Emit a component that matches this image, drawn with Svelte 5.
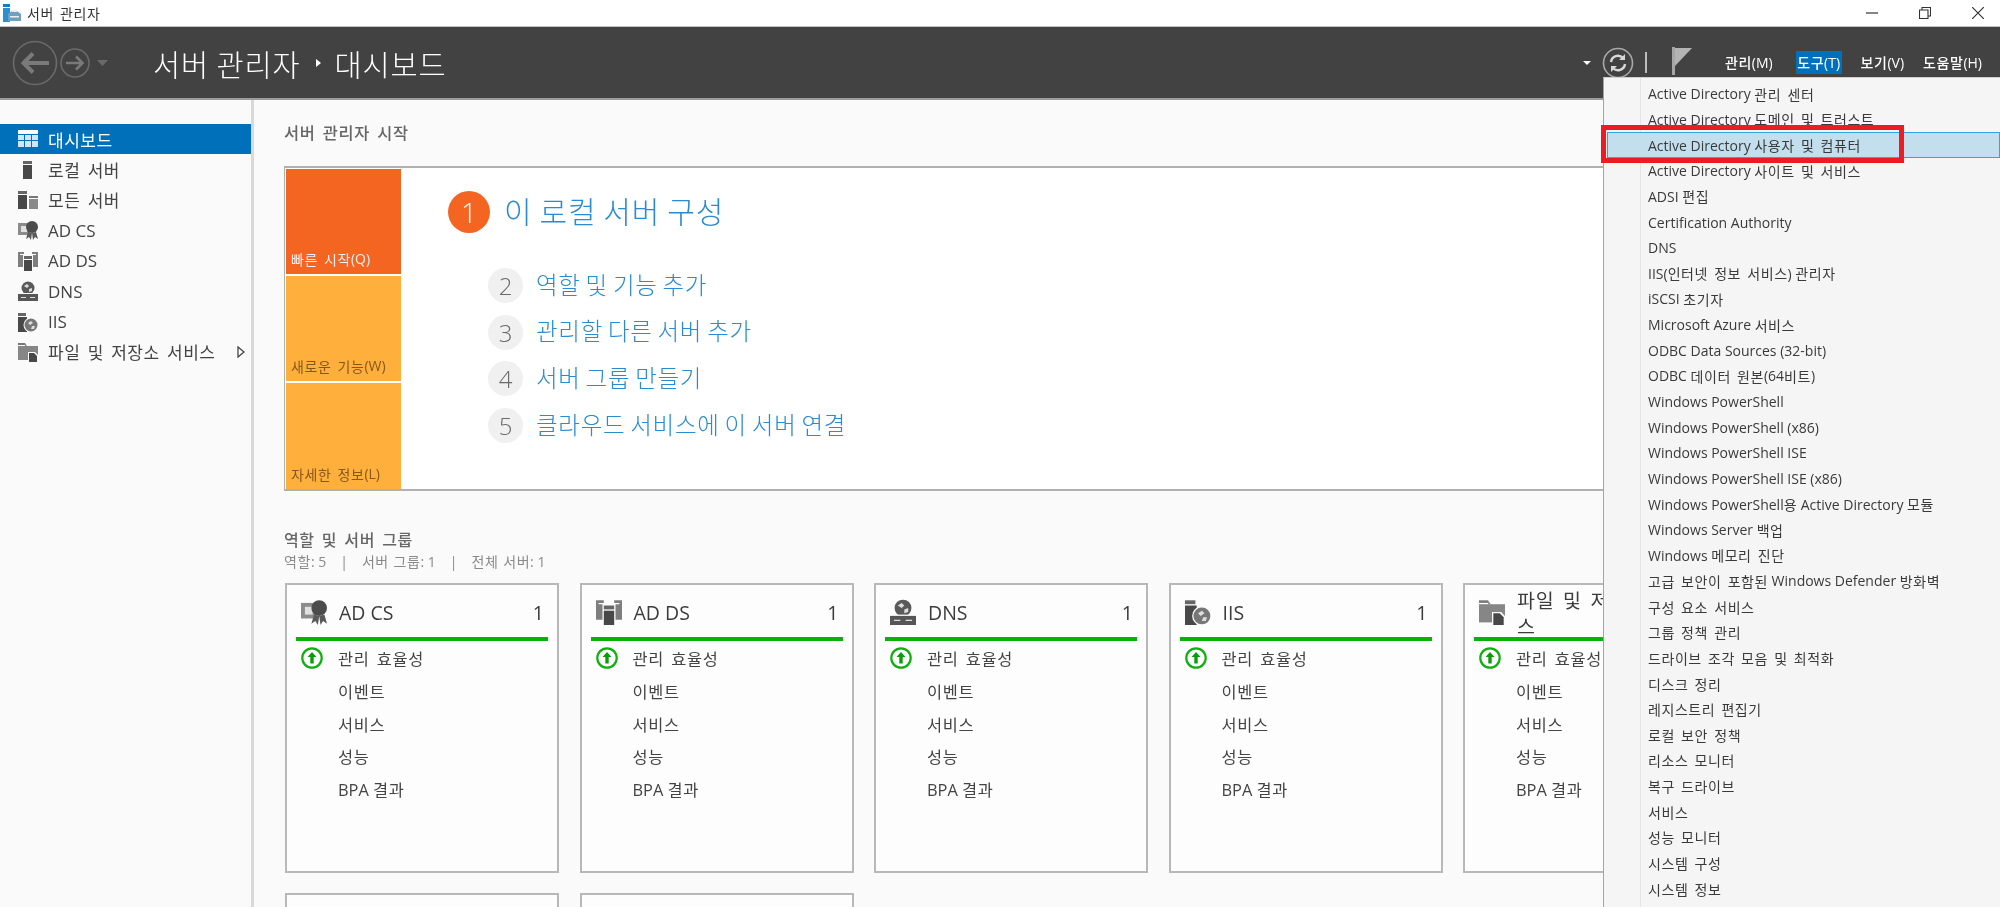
<script>
  const side = [
    ['grid', '대시보드'], ['local', '로컬 서버'], ['all', '모든 서버'], ['cs', 'AD CS'],
    ['ds', 'AD DS'], ['dns', 'DNS'], ['iis', 'IIS'], ['files', '파일 및 저장소 서비스']
  ];
  const steps = ['역할 및 기능 추가', '관리할 다른 서버 추가', '서버 그룹 만들기', '클라우드 서비스에 이 서버 연결'];
  const cards = [['cs', 'AD CS'], ['ds', 'AD DS'], ['dns', 'DNS'], ['iis', 'IIS'], ['files', '파일 및 저장소 서비스']];
  const rows = ['이벤트', '서비스', '성능', 'BPA 결과'];
  const menu = [
    'Active Directory 관리 센터', 'Active Directory 도메인 및 트러스트', 'Active Directory 사용자 및 컴퓨터',
    'Active Directory 사이트 및 서비스', 'ADSI 편집', 'Certification Authority', 'DNS',
    'IIS(인터넷 정보 서비스) 관리자', 'iSCSI 초기자', 'Microsoft Azure 서비스', 'ODBC Data Sources (32-bit)',
    'ODBC 데이터 원본(64비트)', 'Windows PowerShell', 'Windows PowerShell (x86)', 'Windows PowerShell ISE',
    'Windows PowerShell ISE (x86)', 'Windows PowerShell용 Active Directory 모듈', 'Windows Server 백업',
    'Windows 메모리 진단', '고급 보안이 포함된 Windows Defender 방화벽', '구성 요소 서비스', '그룹 정책 관리',
    '드라이브 조각 모음 및 최적화', '디스크 정리', '레지스트리 편집기', '로컬 보안 정책', '리소스 모니터',
    '복구 드라이브', '서비스', '성능 모니터', '시스템 구성', '시스템 정보'
  ];
  const split = (s) => s.split(/([\uAC00-\uD7A3]+(?: +[\uAC00-\uD7A3]+)*)/).filter(Boolean)
    .map((p) => ({ p, ko: /[\uAC00-\uD7A3]/.test(p) }));
</script>

{#snippet t(text)}{#each split(text) as r}<span class:ko={r.ko}>{r.p}</span>{/each}{/snippet}

{#snippet icon(n)}
  <svg class="ic" viewBox="0 0 20 20" width="20" height="20" aria-hidden="true">
    {#if n === 'grid'}
      <path d="M0 1h20v4H0z" fill="#fff"/>
      <path d="M0 6h6v5H0zM7 6h6v5H7zM14 6h6v5h-6zM0 12h6v6H0zM7 12h6v6H7zM14 12h6v6h-6z" fill="#cfe6f6"/>
    {:else if n === 'local'}
      <path d="M5 1h9v3H5z" fill="#666"/><path d="M5 5h9v14H5z" fill="#484848"/>
    {:else if n === 'all'}
      <path d="M0 1h9v3H0z" fill="#666"/><path d="M0 5h9v14H0z" fill="#484848"/>
      <path d="M11 6h9v2h-9z" fill="#777"/><path d="M11 9h9v10h-9z" fill="#8a8a8a"/>
    {:else if n === 'cs'}
      <path d="M0 3h12v12H0z" fill="#8c8c8c"/><path d="M3 6h6v6H3z" fill="#e0e0e0"/>
      <circle cx="14" cy="7" r="6" fill="#4c4c4c"/>
      <path d="M10 12l-2 7 3-2 2 3 1-7zM18 12l2 7-3-2-2 3-1-7z" fill="#5a5a5a"/>
    {:else if n === 'ds'}
      <path d="M0 1h6v2H2v13H0zM20 1h-6v2h4v13h2zM2 4h3v12H2zM15 4h3v12h-3z" fill="#7e7e7e"/>
      <path d="M6 5h8v3H6z" fill="#666"/><path d="M6 9h8v11H6z" fill="#484848"/>
    {:else if n === 'dns'}
      <circle cx="10" cy="7" r="6.5" fill="#5a5a5a"/><path d="M6 5l3-2 2 2-2 2zM11 8l3-1 0 3-3 1z" fill="#ddd"/>
      <path d="M3 12h14v2H3z" fill="#fafafa"/>
      <path d="M0 13h20v7H0z" fill="#565656"/><path d="M3 16h5v1H3zM12 16h5v1h-5z" fill="#ddd"/>
    {:else if n === 'iis'}
      <path d="M0 1h8v3H0z" fill="#666"/><path d="M0 5h9v15H0z" fill="#484848"/>
      <circle cx="13" cy="13" r="7.5" fill="#fafafa"/><circle cx="13" cy="13" r="6.5" fill="#777"/>
      <path d="M10 11l3-2 2 2-3 2zM14 14l3 0-1 3-3 0z" fill="#ddd"/>
    {:else if n === 'files'}
      <path d="M0 1h7v2H0z" fill="#777"/><path d="M0 4h20v14H0z" fill="#868686"/>
      <path d="M7 1l2 3H7z" fill="#868686"/>
      <path d="M10 10h7l3 3v7H10z" fill="#fafafa"/><path d="M11 11h5l3 3v6h-8z" fill="#484848"/>
    {/if}
  </svg>
{/snippet}

<div class="app">
  <div class="titlebar">
    <svg class="appicon" viewBox="0 0 18 18" width="18" height="18" aria-hidden="true">
      <path d="M0 0h7v3H0z" fill="#0f7cc4"/><path d="M0 4h7v14H0z" fill="#2b8fd0"/>
      <path d="M5 10l4-3h5l4 3v7H5z" fill="#6fa0bf"/><path d="M9 6h5v2H9zM7 12h9v1.5H7z" fill="#e6eef4"/>
    </svg>
    <span class="apptitle">{@render t('서버 관리자')}</span>
    <div class="winbtns">
      <svg viewBox="0 0 12 12" width="12" height="12" aria-hidden="true"><path d="M0 6h12" stroke="#333" stroke-width="1.2"/></svg>
      <svg viewBox="0 0 12 12" width="12" height="12" aria-hidden="true"><path d="M.5 3h8.5v8.5H.5zM3 3V.5h8.5V9H9" fill="none" stroke="#333" stroke-width="1.1"/></svg>
      <svg viewBox="0 0 12 12" width="12" height="12" aria-hidden="true"><path d="M0 0l12 12M12 0L0 12" stroke="#333" stroke-width="1.2"/></svg>
    </div>
  </div>

  <header class="head">
    <svg class="nav" viewBox="0 0 100 46" width="100" height="46" aria-hidden="true">
      <circle cx="23" cy="23" r="21.5" fill="none" stroke="#6a6a6a" stroke-width="1.6"/>
      <path d="M37 23H12M21 13.5L11.5 23l9.5 9.5" fill="none" stroke="#7a7a7a" stroke-width="4"/>
      <circle cx="63" cy="23" r="14" fill="none" stroke="#6a6a6a" stroke-width="1.6"/>
      <path d="M54 23h16M64 16.5l6.5 6.5-6.5 6.5" fill="none" stroke="#7a7a7a" stroke-width="2.6"/>
      <path d="M85 20h11l-5.5 6z" fill="#6a6a6a"/>
    </svg>
    <div class="crumb">{@render t('서버 관리자')}<i class="sep"></i>{@render t('대시보드')}</div>
    <div class="tools">
      <i class="drop"></i>
      <svg class="refresh" viewBox="0 0 32 32" width="32" height="32" aria-hidden="true">
        <circle cx="16" cy="16" r="14.5" fill="none" stroke="#a8a8a8" stroke-width="1.6"/>
        <path d="M9 15a7 7 0 0 1 12-4M23 17a7 7 0 0 1-12 4" fill="none" stroke="#d8d8d8" stroke-width="2.4"/>
        <path d="M23 7v6h-6zM9 25v-6h6z" fill="#d8d8d8"/>
      </svg>
      <i class="vline"></i>
      <svg class="flag" viewBox="0 0 20 28" width="20" height="28" aria-hidden="true">
        <path d="M0 0h3v28H0z" fill="#a6a6a6"/><path d="M3 1h17L3 19z" fill="#b4b4b4"/>
      </svg>
      <nav class="menubar">
        <span class="mgt">{@render t('관리')}(M)</span>
        <span class="on">{@render t('도구')}(T)</span>
        <span>{@render t('보기')}(V)</span>
        <span>{@render t('도움말')}(H)</span>
      </nav>
    </div>
  </header>

  <div class="body">
    <aside class="side">
      {#each side as s, i}
        <div class="sitem" class:sel={i === 0}>
          {@render icon(s[0])}
          <span class="slabel">{@render t(s[1])}</span>
          {#if i === side.length - 1}
            <svg class="chev" viewBox="0 0 8 12" width="8" height="12" aria-hidden="true"><path d="M1 1l6 5-6 5z" fill="#fff" stroke="#444" stroke-width="1.3"/></svg>
          {/if}
        </div>
      {/each}
    </aside>

    <main class="main">
      <h1 class="start">{@render t('서버 관리자 시작')}</h1>
      <section class="box">
        <div class="tiles">
          <div class="tile first">{@render t('빠른 시작')}(Q)</div>
          <div class="tile">{@render t('새로운 기능')}(W)</div>
          <div class="tile">{@render t('자세한 정보')}(L)</div>
        </div>
        <div class="quick">
          <div class="hero"><b class="n1">1</b><span class="lift">{@render t('이 로컬 서버 구성')}</span></div>
          {#each steps as s, i}
            <div class="step"><b class="n">{i + 2}</b><span class="lift">{@render t(s)}</span></div>
          {/each}
        </div>
      </section>

      <h2 class="roles">{@render t('역할 및 서버 그룹')}</h2>
      <p class="counts">{@render t('역할')}: 5<i>|</i>{@render t('서버 그룹')}: 1<i>|</i>{@render t('전체 서버')}: 1</p>

      <div class="cards">
        {#each cards as c}
          <article class="card">
            <div class="chead">
              {@render icon(c[0])}
              <div class="ctitle">{@render t(c[1])}</div>
              <div class="ccount">1</div>
            </div>
            <div class="crow first-row">
              <svg class="up" viewBox="0 0 22 22" width="22" height="22" aria-hidden="true">
                <circle cx="11" cy="11" r="9.7" fill="#fff" stroke="#0db00d" stroke-width="2.2"/>
                <path d="M11 5l4.5 5H12.7v6.5H9.3V10H6.5z" fill="#0a9c0a"/>
              </svg>
              {@render t('관리 효율성')}
            </div>
            {#each rows as r}<div class="crow">{@render t(r)}</div>{/each}
          </article>
        {/each}
        <article class="card"></article>
        <article class="card"></article>
      </div>
    </main>
  </div>

  <div class="menu">
    {#each menu as m, i}
      <div class="mi" class:hot={i === 2}>{@render t(m)}</div>
    {/each}
  </div>
  <div class="redbox"></div>
</div>

<style>
  :global(body) { margin: 0; background: #fafafa; }
  .app {
    position: relative; width: 2000px; height: 907px; overflow: hidden; background: #fafafa;
    font-family: "Open Sans", "Noto Sans CJK KR", sans-serif; color: #444; filter: blur(.3px);
  }
  .ko { letter-spacing: var(--ls, .04em); word-spacing: var(--ws, .18em); font-family: "Noto Sans CJK KR", sans-serif; }
  .lift { position: relative; top: -2px; }

  .titlebar { height: 26px; background: #fff; border-bottom: 1px solid #c4c4c4; display: flex; align-items: center; padding-left: 3px; }
  .apptitle { font-size: 14px; margin-left: 6px; color: #333; }
  .winbtns { margin-left: auto; display: flex; gap: 41px; padding-right: 16px; align-items: center; }
  .appicon { flex: none; }

  .head { height: 71px; background: #424242; border-bottom: 2px solid #9c9c9c; display: flex; align-items: center; box-sizing: content-box; }
  .nav { margin-left: 12px; flex: none; }
  .crumb { --ls: .03em; --ws: 0em; margin-left: 41px; font-size: 29.5px; font-weight: 300; color: #fff; display: flex; align-items: center; }
  .sep { width: 0; height: 0; border-left: 5px solid #fff; border-top: 4px solid transparent; border-bottom: 4px solid transparent; margin: 0 14px 0 15px; }
  .tools { margin-left: auto; display: flex; align-items: center; }
  .drop { width: 0; height: 0; border-top: 4px solid #fff; border-left: 4px solid transparent; border-right: 4px solid transparent; margin-right: 11px; }
  .vline { width: 2px; height: 21px; background: #bcbcbc; margin: 0 25px 0 11px; }
  .flag { margin-top: -4px; }
  .menubar { display: flex; gap: 19px; margin-left: 33px; margin-right: 18px; font-size: 14px; color: #fff; font-weight: 500; }
  .menubar span { line-height: 22px; }
  .menubar .mgt { margin-right: 4px; }
  .menubar .on { background: #0070bb; padding: 0 1.5px; }

  .body { display: flex; height: 807px; }
  .side { width: 251px; flex: none; border-right: 3px solid #d9d9d9; padding-top: 24px; box-sizing: content-box; }
  .sitem { height: 30.4px; display: flex; align-items: center; padding-left: 18px; font-size: 17px; color: #444; position: relative; --ls: .03em; }
  .sitem .ic { flex: none; margin-right: 10px; }
  .sitem.sel { background: #0070bb; color: #fff; }
  .chev { position: absolute; left: 237px; top: 9px; }

  .main { flex: 1; min-width: 0; padding: 22px 0 0 30px; overflow: hidden; }
  .start { margin: 0; font-size: 16.4px; line-height: 20px; font-weight: 500; color: #666; }
  .box { margin: 23px -20px 0 0; height: 325px; box-sizing: border-box; border: 1px solid #b0b0b0; border-width: 2px 1px; background: #fff; display: flex; padding: 1px 0 0 1px; }
  .tiles { width: 115px; flex: none; display: flex; flex-direction: column; gap: 2px; }
  .tile { height: 106px; box-sizing: border-box; background: #ffb03c; color: #85581a; font-size: 14px; display: flex; align-items: flex-end; padding: 0 0 5px 5px; white-space: nowrap; line-height: 20px; }
  .tile.first { background: #f46522; color: #ffeef0; height: 105px; }
  .quick { padding: 22px 0 0 47px; --ls: .03em; --ws: -.04em; }
  .hero { --ws: -.02em; display: flex; align-items: center; gap: 14px; font-size: 30px; color: #2a8bd0; height: 42px; font-weight: 300; }
  .n1 { width: 42px; height: 42px; border-radius: 50%; background: #f46522; color: #fff; font-size: 28px; font-weight: 300; display: flex; align-items: center; justify-content: center; }
  .step { display: flex; align-items: center; gap: 13px; font-size: 23.5px; color: #2a8bd0; height: 35px; margin: 11.7px 0 0 40px; font-weight: 300; }
  .hero + .step { margin-top: 35px; }
  .n { width: 35px; height: 35px; border-radius: 50%; background: #f0f0f0; color: #6a6a6a; font-size: 24px; font-weight: 300; display: flex; align-items: center; justify-content: center; }

  .roles { margin: 38px 0 0; font-size: 16px; line-height: 20px; font-weight: 500; color: #666; }
  .counts { margin: 1px 0 0; font-size: 14px; line-height: 20px; color: #8a8a8a; --ws: .08em; }
  .counts i { font-style: normal; margin: 0 14px; }

  .cards { margin: 11px 0 0 1px; display: grid; grid-template-columns: repeat(5, 274px); column-gap: 20.5px; row-gap: 20px; }
  .card { height: 290px; box-sizing: border-box; border: 2px solid #b8b8b8; background: #fdfdfd; padding: 0 9px; overflow: hidden; }
  .chead { height: 49px; border-bottom: 4px solid #08b208; display: flex; align-items: center; padding: 3px 2px 0 5px; box-sizing: content-box; }
  .chead .ic { flex: none; width: 26px; height: 26px; margin-top: -1px; }
  .ctitle { margin-left: 12px; flex: 1; min-width: 0; font-size: 19.5px; line-height: 25px; color: #3c3c3c; }
  .ccount { font-size: 19.5px; color: #3c3c3c; margin-right: 2px; }
  .crow { height: 32.7px; display: flex; align-items: center; white-space: pre; font-size: 16.4px; color: #444; padding-left: 42px; position: relative; }
  .first-row { margin-top: 1px; }
  .up { position: absolute; left: 5px; top: 5px; }

  .menu {
    position: absolute; left: 1603px; top: 77px; width: 397px; height: 830px; box-sizing: border-box;
    background: #f5f5f5 linear-gradient(#e4e4e4, #e4e4e4) 36px 0 / 1px 100% no-repeat;
    border-left: 1px solid #a4a4a4; border-top: 1px solid #cfcfcf; padding: 3px 0 0 3px;
  }
  .mi { height: 25.65px; box-sizing: border-box; padding-left: 41px; font-size: 14px; color: #3a3a3a; display: flex; align-items: center; white-space: pre; }
  .mi.hot { background: #c3dfee; border: 1px solid #33a3e6; padding-left: 40px; }
  .redbox { position: absolute; left: 1601px; top: 125px; width: 303px; height: 38px; box-sizing: border-box; border: 5px solid #ed1c24; }
</style>
